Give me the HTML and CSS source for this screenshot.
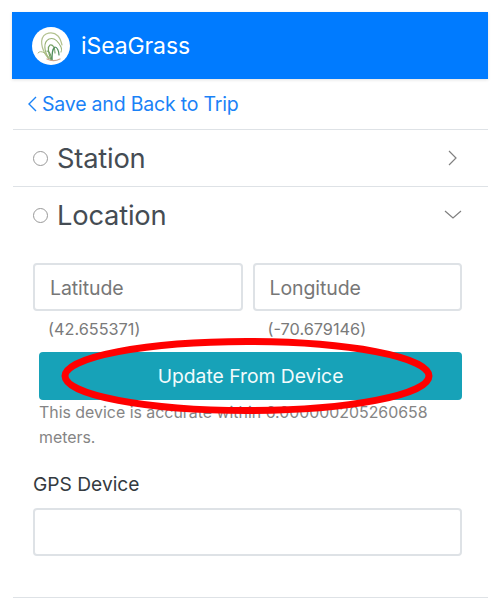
FILE: index.html
```html
<!DOCTYPE html>
<html lang="en">
<head>
<meta charset="utf-8">
<title>iSeaGrass</title>
<link rel="stylesheet" href="styles.css">
</head>
<body>
<div class="app">
  <header class="topbar">
    <svg class="logo" viewBox="0 0 38 38" aria-hidden="true">
      <circle cx="19" cy="19" r="19" fill="#fff"/>
      <g fill="none" stroke-linecap="round">
        <path d="M16 31C9 22 7 11 14 7c5-2 9-1 12 2 2 2 3 5 4 9" stroke="#b3c290" stroke-width="1.200"/>
        <path d="M17 32C12 24 11 15 17 12c5-2 9 2 12 8 1 2 1 3 0 5" stroke="#9ab376" stroke-width="1.100"/>
        <path d="M18 32c-3-5-9-10-12-6" stroke="#a9bb82" stroke-width="1"/>
        <path d="M19 33c-3-8-4-13-1-15 3-1 5 3 5 8" stroke="#78a164" stroke-width="1.200"/>
        <path d="M20 33c-1-5-3-9-5-9" stroke="#6b9a60" stroke-width="1.100"/>
        <path d="M20 33c0-6 0-11 3-13 2 0 4 4 4 8" stroke="#4f8c5c" stroke-width="1.200"/>
        <path d="M15 32c4 2 9 2 13 0" stroke="#cfa78d" stroke-width="1.300"/>
      </g>
    </svg>
    <span class="brand">iSeaGrass</span>
  </header>

  <nav class="backrow">
    <svg class="backchev" viewBox="0 0 10 16" aria-hidden="true"><path d="M9 1 2 8l7 7"/></svg>
    <a class="backlink">Save and Back to Trip</a>
  </nav>

  <section class="row">
    <span class="radio"></span>
    <span class="rowtitle">Station</span>
    <svg class="chev-right" viewBox="0 0 10 16" aria-hidden="true"><path d="M1 1l7 7-7 7"/></svg>
  </section>

  <section class="row row-open">
    <span class="radio"></span>
    <span class="rowtitle">Location</span>
    <svg class="chev-down" viewBox="0 0 18 10" aria-hidden="true"><path d="M1 1l8 7 8-7"/></svg>
  </section>

  <div class="panel">
    <div class="coords">
      <div class="coord">
        <div class="field">Latitude</div>
        <div class="hint">(42.655371)</div>
      </div>
      <div class="coord">
        <div class="field">Longitude</div>
        <div class="hint">(-70.679146)</div>
      </div>
    </div>
    <div class="update">Update From Device</div>
    <p class="accuracy">This device is accurate within 6.000000205260658 meters.</p>
    <label class="gps-label">GPS Device</label>
    <div class="gps-input"></div>
  </div>
  <div class="endrule"></div>

  <svg class="annotation" viewBox="0 0 372 78" aria-hidden="true">
    <ellipse cx="186" cy="39" rx="182" ry="34.500"/>
  </svg>
</div>
</body>
</html>
```

FILE: styles.css
```css
* { box-sizing: border-box; }
html, body { margin: 0; background: #fff; }
body { font-family: Inter, "Liberation Sans", sans-serif; color: #343a40; }
.app { position: relative; width: 500px; height: 609px; padding: 12px 12px 0 13px; overflow: hidden; }

.topbar { display: flex; align-items: center; height: 67px; margin-left: -1px; background: #007bff; padding-left: 20px; box-shadow: 0 1px 3px rgba(0,0,0,.12); }
.logo { width: 38px; height: 38px; flex: none; }
.brand { margin-left: 11px; color: #fff; font-size: 23px; letter-spacing: -.1px; }

.backrow { display: flex; align-items: center; height: 50px; padding-left: 15px; color: #1a82f7; }
.backchev { width: 10px; height: 16px; margin-left: -1px; fill: none; stroke: #1a82f7; stroke-width: 1.4; }
.backlink { margin-left: 5px; font-size: 19.500px; letter-spacing: -.2px; }

.row { display: flex; align-items: center; height: 57px; padding-left: 20px; border-top: 1px solid #dee2e6; }
.radio { width: 15px; height: 15px; border: 1.500px solid #999; border-radius: 50%; flex: none; }
.rowtitle { margin-left: 9px; font-size: 27.300px; letter-spacing: -.2px; color: #454c53; flex: 1; }
.chev-right { width: 10px; height: 16px; margin-right: 30px; fill: none; stroke: #808080; stroke-width: 1.200; }
.chev-down { width: 18px; height: 10px; margin-right: 26px; fill: none; stroke: #808080; stroke-width: 1.200; }

.panel { padding: 20px 26px 0 20px; }
.coords { display: flex; gap: 10px; }
.coord { flex: 1; min-width: 0; }
.field { height: 48px; border: 2px solid #dee2e6; border-radius: 4px; padding-left: 15px; line-height: 47px; font-size: 19.500px; color: #777; letter-spacing: -.1px; }
.hint { margin: 8px 0 0 15px; font-size: 16.300px; line-height: 20px; color: #7a7a7a; }
.update { height: 48px; margin: 13px 0 0 6px; border-radius: 4px; background: #17a2b8; color: #f2fbfc; font-size: 19.300px; line-height: 48px; text-align: center; }
.accuracy { margin: 0 0 0 6px; font-size: 15.900px; line-height: 25px; color: #858585; }
.gps-label { display: block; margin-top: 22px; font-size: 19.200px; line-height: 24px; color: #343a40; }
.gps-input { height: 48px; margin-top: 12px; border: 2px solid #dee2e6; border-radius: 4px; }
.endrule { height: 1px; margin-top: 41px; background: #dee2e6; }

.annotation { position: absolute; left: 61px; top: 337px; width: 372px; height: 78px; fill: none; stroke: #f00; stroke-width: 7; }
```
